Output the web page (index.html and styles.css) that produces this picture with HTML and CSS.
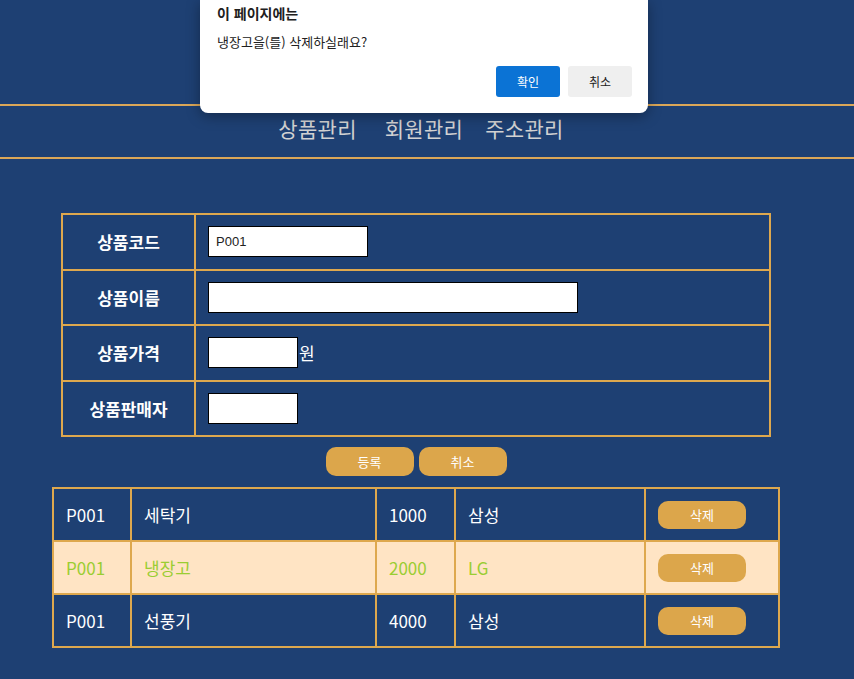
FILE: index.html
```html
<!DOCTYPE html>
<html lang="ko">
<head>
<meta charset="utf-8">
<title>상품관리</title>
<link rel="stylesheet" href="styles.css">
</head>
<body>
<header class="top"></header>
<nav class="menu">
  <a class="menu-item">상품관리</a>
  <a class="menu-item">회원관리</a>
  <a class="menu-item">주소관리</a>
</nav>
<main class="content">
  <table class="form">
    <tr><th>상품코드</th><td><input class="in in-code" type="text" value="P001"></td></tr>
    <tr><th>상품이름</th><td><input class="in in-name" type="text"></td></tr>
    <tr><th>상품가격</th><td><input class="in in-short" type="text"><span class="unit">원</span></td></tr>
    <tr><th>상품판매자</th><td><input class="in in-short" type="text"></td></tr>
  </table>
  <div class="actions">
    <button class="btn">등록</button>
    <button class="btn">취소</button>
  </div>
  <table class="list">
    <colgroup>
      <col class="c1"><col class="c2"><col class="c3"><col class="c4"><col class="c5">
    </colgroup>
    <tr><td>P001</td><td>세탁기</td><td>1000</td><td>삼성</td><td><button class="btn btn-del">삭제</button></td></tr>
    <tr class="selected"><td>P001</td><td>냉장고</td><td>2000</td><td>LG</td><td><button class="btn btn-del">삭제</button></td></tr>
    <tr><td>P001</td><td>선풍기</td><td>4000</td><td>삼성</td><td><button class="btn btn-del">삭제</button></td></tr>
  </table>
</main>
<div class="dialog">
  <div class="dialog-title">이 페이지에는</div>
  <div class="dialog-msg">냉장고을(를) 삭제하실래요?</div>
  <div class="dialog-actions">
    <button class="dbtn dbtn-ok">확인</button>
    <button class="dbtn dbtn-cancel">취소</button>
  </div>
</div>
</body>
</html>
```
FILE: styles.css
```css
html, body {
  margin: 0;
  padding: 0;
  background: #1e4073;
  font-family: "Noto Sans CJK KR", "Noto Sans", sans-serif;
  color: #ffffff;
  height: 679px;
  overflow: hidden;
}

.top {
  height: 104px;
}

.menu {
  border-top: 2px solid #dba758;
  border-bottom: 2px solid #dba758;
  display: flex;
  justify-content: center;
  align-items: center;
  padding-right: 12px;
  padding-bottom: 6px;
  box-sizing: border-box;
  height: 55px;
}

.menu-item {
  font-size: 21px;
  color: #d2d2d2;
  line-height: 1;
  letter-spacing: 0.3px;
}

.menu-item:nth-child(1) { margin-right: 28px; }
.menu-item:nth-child(2) { margin-right: 22px; }

.content {
  padding-top: 54px;
}

table {
  border-collapse: collapse;
}

.form {
  margin-left: 61px;
  width: 710px;
}

.form th, .form td {
  border: 2px solid #dea84e;
  height: 53.5px;
  padding: 0;
}

.form th {
  width: 131px;
  font-size: 17px;
  font-weight: 700;
  color: #ffffff;
  text-align: center;
}

.form td {
  padding-left: 12px;
  text-align: left;
  font-size: 17px;
}

.in {
  box-sizing: border-box;
  height: 31px;
  border: 1px solid #000000;
  background: #ffffff;
  padding: 0 7px;
  font-family: "Liberation Sans", Arial, sans-serif;
  font-size: 13px;
  color: #222;
  vertical-align: middle;
  margin: 0;
  outline: none;
}

.in-code { width: 160px; }
.in-name { width: 370px; }
.in-short { width: 90px; }

.unit {
  vertical-align: middle;
  font-size: 17px;
  margin-left: 1px;
}

.actions {
  display: flex;
  justify-content: center;
  gap: 5px;
  padding: 10px 0 11px;
  padding-right: 22px;
}

.btn {
  background: #dca64b;
  border: none;
  border-radius: 10px;
  color: #ffffff;
  font-family: "Noto Sans CJK KR", sans-serif;
  font-size: 13px;
  width: 88px;
  height: 29px;
  padding: 0;
  line-height: 1;
}

.list {
  margin-left: 52px;
  width: 728px;
}

.c1 { width: 78px; }
.c2 { width: 245px; }
.c3 { width: 79px; }
.c4 { width: 190px; }
.c5 { width: 134px; }

.list td {
  border: 2px solid #dea84e;
  height: 51px;
  padding: 0 0 0 12px;
  font-size: 17px;
  color: #ffffff;
  text-align: left;
  vertical-align: middle;
}

.list .selected td {
  background: #ffe4c4;
  color: #9acd32;
}

.btn-del {
  height: 28px;
  width: 88px;
}

.dialog {
  position: absolute;
  left: 200px;
  top: 0;
  width: 448px;
  height: 113px;
  box-sizing: border-box;
  background: #ffffff;
  border-radius: 0 0 8px 8px;
  box-shadow: 0 3px 14px rgba(0, 0, 0, 0.35);
  padding: 4px 16px 0 17px;
  color: #202020;
  font-family: "Noto Sans CJK KR", sans-serif;
}

.dialog-title {
  font-size: 14px;
  font-weight: 700;
  line-height: 18px;
}

.dialog-msg {
  font-size: 13px;
  line-height: 18px;
  margin-top: 11px;
}

.dialog-actions {
  display: flex;
  justify-content: flex-end;
  gap: 8px;
  margin-top: 15px;
}

.dbtn {
  width: 64px;
  height: 31px;
  border: none;
  border-radius: 3px;
  font-family: "Noto Sans CJK KR", sans-serif;
  font-size: 12px;
  padding: 0;
}

.dbtn-ok {
  background: #0b73d5;
  color: #ffffff;
}

.dbtn-cancel {
  background: #efefef;
  color: #222222;
}
```
